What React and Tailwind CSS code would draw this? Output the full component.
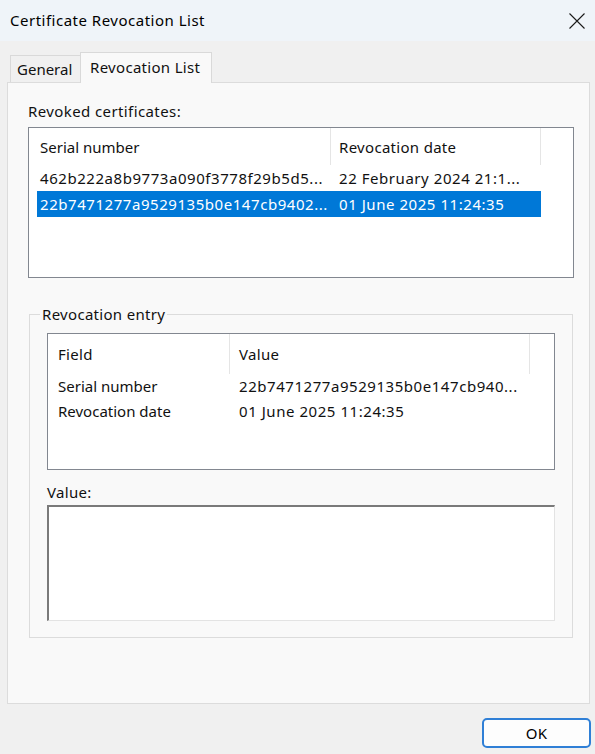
import React from 'react'

const font = "font-['Noto_Sans',sans-serif]"

const CloseIcon = () => (
  <svg width="16" height="16" viewBox="0 0 16 16" fill="none" stroke="#1a1a1a" strokeWidth="1.1">
    <path d="M0.5 0.5 L15.5 15.5 M15.5 0.5 L0.5 15.5" />
  </svg>
)

const revoked = [
  { serial: '462b222a8b9773a090f3778f29b5d5...', date: '22 February 2024 21:1...' },
  { serial: '22b7471277a9529135b0e147cb9402...', date: '01 June 2025 11:24:35', selected: true },
]

const entry = [
  { field: 'Serial number', value: '22b7471277a9529135b0e147cb940...' },
  { field: 'Revocation date', value: '01 June 2025 11:24:35' },
]

const App = () => {
  return (
    <div className={`w-[595px] h-[754px] bg-[#f0f0f0] text-[#111] text-[15px] tracking-[0.3px] flex flex-col overflow-hidden ${font}`}>
      {/* title bar */}
      <div className="h-[41px] shrink-0 bg-[#eff4f9] flex items-center justify-between pl-[10px] pr-[10px]">
        <span className="text-[15px] tracking-[0.5px] text-black">Certificate Revocation List</span>
        <CloseIcon />
      </div>

      <div className="px-[7px] mt-[11px]">
        {/* tabs */}
        <div className="flex items-end h-[30px] pl-[3px]">
          <div className="h-[27px] w-[71px] border border-b-0 border-[#d9d9d9] bg-[#f0f0f0] flex items-center pl-[6px] -mr-px tracking-normal">
            General
          </div>
          <div className="h-[31px] w-[132px] border border-b-0 border-[#d9d9d9] bg-[#f9f9f9] flex items-center pl-[9px] pb-[2px] relative z-10 -mb-px">
            Revocation List
          </div>
        </div>

        {/* panel */}
        <div className="h-[622px] w-[583px] border border-[#dcdcdc] bg-[#f9f9f9] pl-[20px]">
          <div className="mt-[18px] leading-[20px] tracking-[0.4px]">Revoked certificates:</div>
          <div className="mt-[6px] w-[546px] h-[151px] border border-[#828790] bg-white">
            <div className="flex h-[37px] ml-[8px] items-center">
              <div className="w-[294px] h-full flex items-center pl-[3px] pt-[2px] border-r border-[#e5e5e5] tracking-normal">Serial number</div>
              <div className="w-[210px] h-full flex items-center pl-[8px] pt-[2px] border-r border-[#e5e5e5]">Revocation date</div>
            </div>
            {revoked.map((r) => (
              <div
                key={r.serial}
                className={`flex h-[26px] ml-[8px] w-[504px] items-center whitespace-nowrap tracking-[0.55px] ${r.selected ? 'bg-[#0078d7] text-white' : ''}`}
              >
                <div className="w-[294px] pl-[3px] overflow-hidden">{r.serial}</div>
                <div className="w-[210px] pl-[8px] overflow-hidden">{r.date}</div>
              </div>
            ))}
          </div>

          <fieldset className="mt-[26px] ml-[1px] w-[544px] border border-[#dcdcdc] pb-[16px]">
            <legend className="ml-[10px] px-[2px] leading-[20px]">Revocation entry</legend>
            <div className="mx-[17px]">
              <div className="mt-[9px] h-[137px] border border-[#828790] bg-white">
                <div className="flex h-[40px] ml-[8px] items-center">
                  <div className="w-[174px] h-full flex items-center pl-[2px] pt-[1px] border-r border-[#e5e5e5]">Field</div>
                  <div className="w-[300px] h-full flex items-center pl-[9px] pt-[1px] border-r border-[#e5e5e5]">Value</div>
                </div>
                {entry.map((e) => (
                  <div key={e.field} className="flex h-[25px] ml-[8px] items-center whitespace-nowrap">
                    <div className="w-[174px] pl-[2px] tracking-normal">{e.field}</div>
                    <div className="w-[300px] pl-[9px] overflow-hidden tracking-[0.55px]">{e.value}</div>
                  </div>
                ))}
              </div>
              <div className="mt-[12px] leading-[20px]">Value:</div>
              <div className="mt-[3px] h-[116px] bg-white border-t-2 border-l-2 border-r border-b border-t-[#7a7a7a] border-l-[#7a7a7a] border-r-[#e3e3e3] border-b-[#e3e3e3]" />
            </div>
          </fieldset>
        </div>
      </div>

      {/* footer */}
      <div className="flex justify-end pr-[4px] mt-[14px]">
        <button className="w-[109px] h-[30px] rounded-[5px] border-2 border-[#2f7fd6] bg-[#fdfdfd] text-[15px] text-black flex items-center justify-center">
          OK
        </button>
      </div>
    </div>
  )
}

export default App
